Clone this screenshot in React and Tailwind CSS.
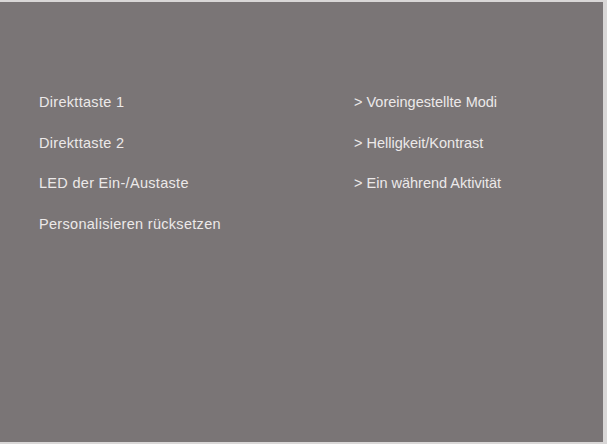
export default function App() {
  const left = ['Direkttaste 1', 'Direkttaste 2', 'LED der Ein-/Austaste', 'Personalisieren rücksetzen'];
  const right = ['> Voreingestellte Modi', '> Helligkeit/Kontrast', '> Ein während Aktivität'];

  return (
    <div className="h-[444px] w-[607px] bg-[#d9d7d7] pt-[2px] pr-[4px] pb-[2px]">
      <div className="h-full w-full bg-[#7a7576] pt-[80px] pl-[39px] font-['Liberation_Sans',Arial,sans-serif] text-[14.5px] text-[#ece9e9]">
        <div className="grid grid-cols-[315px_1fr]">
          <div className="flex flex-col">
            {left.map((t) => (
              <div key={t} className="h-[40.5px] leading-[40px] tracking-[0.3px]">{t}</div>
            ))}
          </div>
          <div className="flex flex-col">
            {right.map((t) => (
              <div key={t} className="h-[40.5px] leading-[40px]">{t}</div>
            ))}
          </div>
        </div>
      </div>
    </div>
  );
}
